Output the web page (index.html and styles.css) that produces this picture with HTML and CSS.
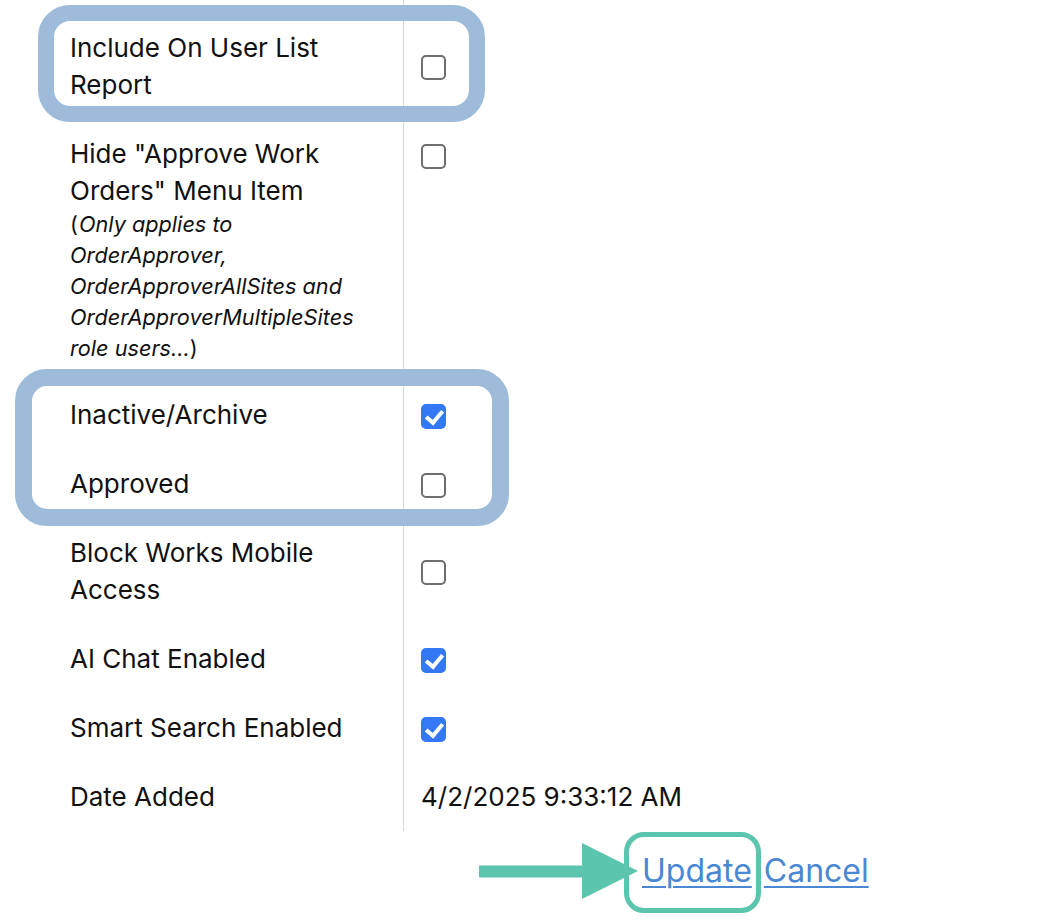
FILE: index.html
```html
<!DOCTYPE html>
<html lang="en">
<head>
<meta charset="utf-8">
<title>User Settings</title>
<link rel="stylesheet" href="styles.css">
</head>
<body>
<div class="page">
  <div class="form-table">
    <div class="row first">
      <div class="label">Include On User List Report</div>
      <div class="value"><span class="cb"></span></div>
    </div>
    <div class="row top">
      <div class="label">Hide "Approve Work Orders" Menu Item
        <div class="note">(<em>Only applies to OrderApprover, OrderApproverAllSites and OrderApproverMultipleSites role users...</em>)</div>
      </div>
      <div class="value"><span class="cb"></span></div>
    </div>
    <div class="row">
      <div class="label">Inactive/Archive</div>
      <div class="value"><span class="cb checked"></span></div>
    </div>
    <div class="row">
      <div class="label">Approved</div>
      <div class="value"><span class="cb"></span></div>
    </div>
    <div class="row">
      <div class="label">Block Works Mobile Access</div>
      <div class="value"><span class="cb"></span></div>
    </div>
    <div class="row">
      <div class="label">AI Chat Enabled</div>
      <div class="value"><span class="cb checked"></span></div>
    </div>
    <div class="row">
      <div class="label">Smart Search Enabled</div>
      <div class="value"><span class="cb checked"></span></div>
    </div>
    <div class="row">
      <div class="label">Date Added</div>
      <div class="value text">4/2/2025 9:33:12 AM</div>
    </div>
  </div>
  <div class="actions">
    <a href="#" class="link">Update</a>
    <a href="#" class="link">Cancel</a>
  </div>

  <div class="hl hl-1"></div>
  <div class="hl hl-2"></div>
  <div class="hl-green"></div>
  <svg class="arrow" width="170" height="60" viewBox="0 0 170 60">
    <rect x="0" y="23.5" width="110" height="12" fill="#5cc5ae"/>
    <polygon points="103,1 103,57 159,29" fill="#5cc5ae"/>
  </svg>
</div>
</body>
</html>
```

FILE: styles.css
```css
html, body {
  margin: 0;
  padding: 0;
  background: #ffffff;
}

body {
  font-family: Inter, "Noto Sans", "Liberation Sans", sans-serif;
  color: #111111;
}

.page {
  position: relative;
  width: 1055px;
  height: 924px;
  overflow: hidden;
}

.form-table {
  display: flex;
  flex-direction: column;
}

.row {
  display: flex;
  align-items: stretch;
}

.label {
  box-sizing: border-box;
  width: 404px;
  flex: none;
  padding: 16px 38px 16px 70px;
  border-right: 1px solid #d3dbe0;
  font-size: 26px;
  line-height: 37px;
}

.row.first .label {
  padding-top: 28.5px;
}

.note {
  font-size: 21.7px;
  line-height: 31px;
}

.note em {
  font-style: italic;
  padding-left: 1px;
}

.value {
  flex: 1;
  display: flex;
  align-items: center;
  padding: 16px 0 16px 17px;
  font-size: 26px;
  line-height: 37px;
}

.row.first .value {
  padding-top: 28.5px;
}

.row.top .value {
  align-items: flex-start;
}

.cb {
  box-sizing: border-box;
  display: block;
  width: 25px;
  height: 25px;
  margin-top: 4px;
  border: 2px solid #6e6e6e;
  border-radius: 5px;
  background: #ffffff;
  position: relative;
}

.row.top .cb {
  margin-top: 9px;
}

.cb.checked {
  border-color: #3478f6;
  background: #3478f6;
}

.cb.checked::after {
  content: "";
  position: absolute;
  left: 6px;
  top: 1px;
  width: 7px;
  height: 13px;
  border-right: 4px solid #ffffff;
  border-bottom: 4px solid #ffffff;
  transform: rotate(40deg);
}

.actions {
  display: flex;
  gap: 12px;
  padding-left: 642px;
  margin-top: 20px;
  font-size: 32px;
  line-height: 40px;
}

.link {
  color: #4a88d4;
  text-decoration: underline;
  text-decoration-thickness: 2px;
  text-underline-offset: 4px;
}

/* annotation overlays */
.hl {
  position: absolute;
  box-sizing: border-box;
  border: 16px solid #9ebcda;
  border-radius: 32px;
}

.hl-1 {
  left: 38px;
  top: 5px;
  width: 447px;
  height: 117px;
}

.hl-2 {
  left: 15px;
  top: 369px;
  width: 494px;
  height: 157px;
  border-width: 17px;
}

.hl-green {
  position: absolute;
  box-sizing: border-box;
  left: 624px;
  top: 832px;
  width: 137px;
  height: 81px;
  border: 5px solid #5cc5ae;
  border-radius: 20px;
}

.arrow {
  position: absolute;
  left: 479px;
  top: 842px;
}
```
